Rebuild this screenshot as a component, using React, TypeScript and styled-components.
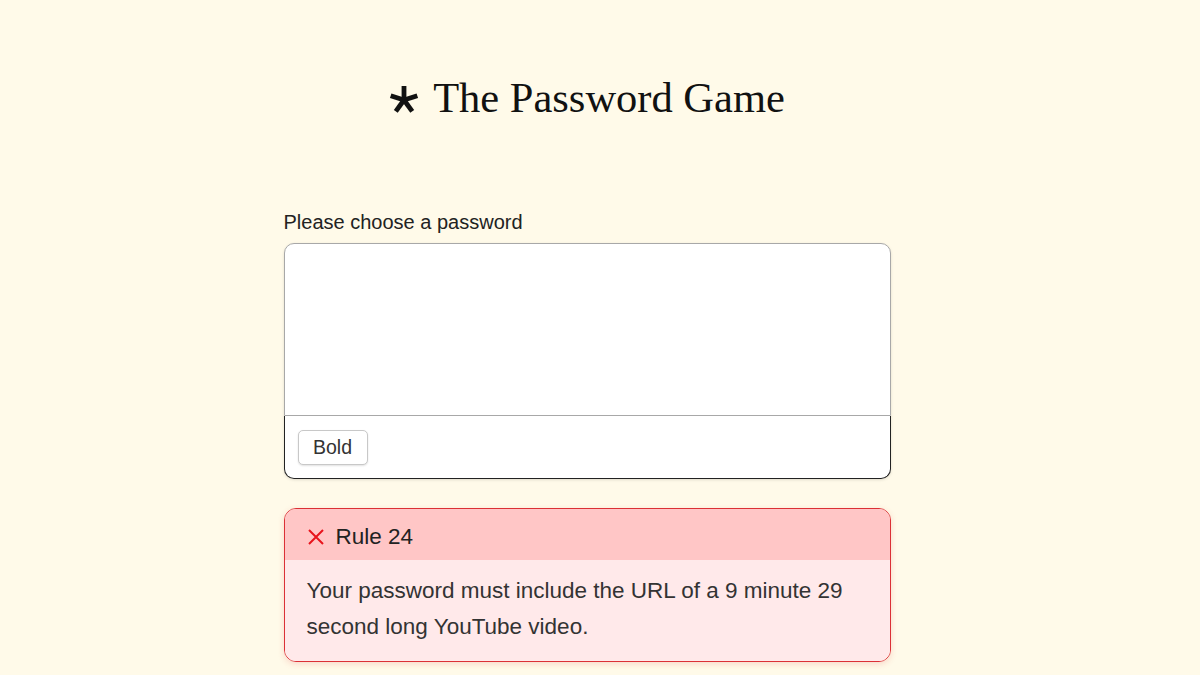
import React from "react";
import styled, { createGlobalStyle } from "styled-components";

const Global = createGlobalStyle`
  html, body { margin: 0; padding: 0; background: #fffae9; }
  body { font-family: "Liberation Sans", Arial, sans-serif; color: #222; }
`;

const Page = styled.div`
  min-height: 675px;
  padding-right: 26px;
  display: flex;
  flex-direction: column;
  align-items: center;
`;

const Title = styled.h1`
  margin: 74px 0 0 0;
  height: 48px;
  display: flex;
  align-items: center;
  gap: 14px;
  font-family: "Liberation Serif", "Times New Roman", serif;
  font-weight: 400;
  font-size: 42.5px;
  line-height: 48px;
  color: #111;
`;

const Star = styled.svg`
  width: 30px;
  height: 30px;
  margin-top: 3px;
`;

const Column = styled.div`
  width: 607px;
  margin-top: 89px;
  display: flex;
  flex-direction: column;
`;

const Label = styled.label`
  font-size: 20px;
  line-height: 23px;
  color: #222;
  margin-bottom: 9px;
`;

const Box = styled.div`
  display: flex;
  flex-direction: column;
  border-radius: 10px;
  box-shadow: 0 1px 3px rgba(0, 0, 0, 0.12);
`;

const Editor = styled.div`
  height: 171px;
  background: #fff;
  border: 1px solid #a8a8a8;
  border-bottom: 1px solid #a8a8a8;
  border-radius: 10px 10px 0 0;
`;

const Toolbar = styled.div`
  height: 63px;
  background: #fff;
  border: 1px solid #222;
  border-top: none;
  border-radius: 0 0 10px 10px;
  display: flex;
  align-items: center;
  padding: 0 13px;
  box-sizing: border-box;
`;

const Button = styled.button`
  width: 70px;
  height: 35px;
  border: 1px solid #c8c8c8;
  border-radius: 5px;
  background: #fff;
  font-family: "Liberation Sans", Arial, sans-serif;
  font-size: 19.5px;
  color: #333;
  box-shadow: 0 1px 2px rgba(0, 0, 0, 0.12);
  padding: 0;
  margin-top: 1px;
`;

const Rule = styled.div`
  margin-top: 29px;
  border: 1px solid #db3036;
  border-radius: 12px;
  overflow: hidden;
  box-shadow: 0 2px 6px rgba(220, 60, 60, 0.18);
`;

const RuleHeader = styled.div`
  height: 51px;
  box-sizing: border-box;
  padding: 4px 22px 0 22px;
  background: #ffc6c6;
  display: flex;
  align-items: center;
  gap: 11px;
  font-size: 22.5px;
  color: #222;
`;

const RuleBody = styled.div`
  background: #ffe9ea;
  padding: 13px 22px 16px 22px;
  font-size: 22.5px;
  line-height: 36px;
  color: #333;
`;

const StarIcon = () => {
  const arms = [-90, -18, 54, 126, 198];
  return (
    <Star viewBox="0 0 30 30">
      {arms.map((a) => {
        const r = (a * Math.PI) / 180;
        return (
          <line
            key={a}
            x1={15}
            y1={15}
            x2={15 + Math.cos(r) * 14}
            y2={15 + Math.sin(r) * 14}
            stroke="#111"
            strokeWidth={4.8}
            strokeLinecap="butt"
          />
        );
      })}
    </Star>
  );
};

const XIcon = () => (
  <svg width="18" height="18" viewBox="0 0 18 18">
    <path d="M2 2 L16 16 M16 2 L2 16" stroke="#e8141c" strokeWidth="2" fill="none" />
  </svg>
);

export default function App() {
  return (
    <>
      <Global />
      <Page>
        <Title>
          <StarIcon />
          The Password Game
        </Title>
        <Column>
          <Label>Please choose a password</Label>
          <Box>
            <Editor />
            <Toolbar>
              <Button>Bold</Button>
            </Toolbar>
          </Box>
          <Rule>
            <RuleHeader>
              <XIcon />
              Rule 24
            </RuleHeader>
            <RuleBody>
              Your password must include the URL of a 9 minute 29 second long YouTube video.
            </RuleBody>
          </Rule>
        </Column>
      </Page>
    </>
  );
}
